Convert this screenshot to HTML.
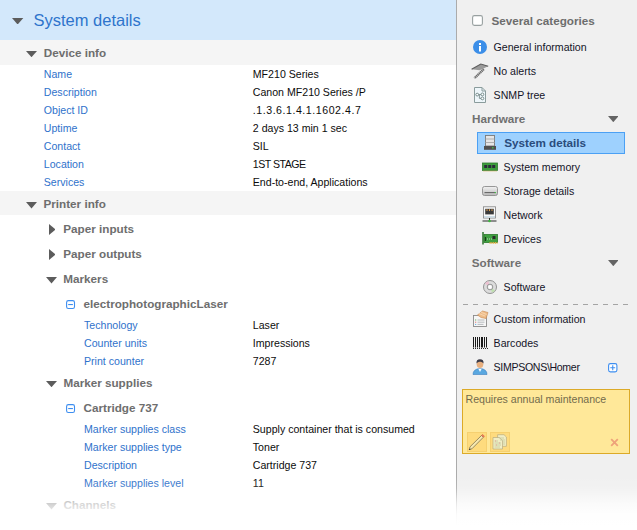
<!DOCTYPE html>
<html><head><meta charset="utf-8"><style>
html,body{margin:0;padding:0;}
body{width:637px;height:530px;position:relative;overflow:hidden;background:#fff;font-family:"Liberation Sans",sans-serif;}
.t{position:absolute;white-space:nowrap;line-height:1;}
svg{display:block}
</style></head><body>
<div style="position:absolute;left:0px;top:0px;width:456px;height:40px;background:#d3e8fb"></div>
<svg style="position:absolute;left:12.4px;top:17.7px" width="11.3" height="6.5"><path d="M0 0H11.3L5.65 6.5Z" fill="#5c5c5c"/></svg>
<div class="t" style="left:33.50px;top:12.03px;font-size:16.5px;color:#2e74cc;">System details</div>
<div style="position:absolute;left:0px;top:40px;width:456px;height:25px;background:#f5f5f5"></div>
<svg style="position:absolute;left:25.5px;top:50.6px" width="11" height="6.2"><path d="M0 0H11L5.5 6.2Z" fill="#5c5c5c"/></svg>
<div class="t" style="left:43.80px;top:46.70px;font-size:11.7px;color:#6e6e6e;font-weight:bold;">Device info</div>
<div class="t" style="left:43.80px;top:68.93px;font-size:10.6px;color:#2f72cb;">Name</div>
<div class="t" style="left:252.80px;top:68.93px;font-size:10.6px;color:#0c0c0c;">MF210 Series</div>
<div class="t" style="left:43.80px;top:86.93px;font-size:10.6px;color:#2f72cb;">Description</div>
<div class="t" style="left:252.80px;top:86.93px;font-size:10.6px;color:#0c0c0c;">Canon MF210 Series /P</div>
<div class="t" style="left:43.80px;top:104.93px;font-size:10.6px;color:#2f72cb;">Object ID</div>
<div class="t" style="left:252.80px;top:104.93px;font-size:10.6px;color:#0c0c0c;"><span style="letter-spacing:0.54px">.1.3.6.1.4.1.1602.4.7</span></div>
<div class="t" style="left:43.80px;top:122.93px;font-size:10.6px;color:#2f72cb;">Uptime</div>
<div class="t" style="left:252.80px;top:122.93px;font-size:10.6px;color:#0c0c0c;">2 days 13 min 1 sec</div>
<div class="t" style="left:43.80px;top:140.93px;font-size:10.6px;color:#2f72cb;">Contact</div>
<div class="t" style="left:252.80px;top:140.93px;font-size:10.6px;color:#0c0c0c;">SIL</div>
<div class="t" style="left:43.80px;top:158.93px;font-size:10.6px;color:#2f72cb;">Location</div>
<div class="t" style="left:252.80px;top:158.93px;font-size:10.6px;color:#0c0c0c;"><span style="letter-spacing:-0.5px">1ST STAGE</span></div>
<div class="t" style="left:43.80px;top:176.93px;font-size:10.6px;color:#2f72cb;">Services</div>
<div class="t" style="left:252.80px;top:176.93px;font-size:10.6px;color:#0c0c0c;">End-to-end, Applications</div>
<div style="position:absolute;left:0px;top:191px;width:456px;height:24px;background:#f5f5f5"></div>
<svg style="position:absolute;left:25.5px;top:202px" width="11" height="6.5"><path d="M0 0H11L5.5 6.5Z" fill="#5c5c5c"/></svg>
<div class="t" style="left:43.50px;top:198.10px;font-size:11.7px;color:#6e6e6e;font-weight:bold;">Printer info</div>
<svg style="position:absolute;left:48.5px;top:223.6px" width="6.6" height="11"><path d="M0 0L6.6 5.5L0 11Z" fill="#5c5c5c"/></svg>
<div class="t" style="left:63.30px;top:223.40px;font-size:11.7px;color:#6e6e6e;font-weight:bold;">Paper inputs</div>
<svg style="position:absolute;left:48.5px;top:248.5px" width="6.6" height="11"><path d="M0 0L6.6 5.5L0 11Z" fill="#5c5c5c"/></svg>
<div class="t" style="left:63.30px;top:247.70px;font-size:11.7px;color:#6e6e6e;font-weight:bold;">Paper outputs</div>
<svg style="position:absolute;left:46px;top:277px" width="11" height="6.5"><path d="M0 0H11L5.5 6.5Z" fill="#5c5c5c"/></svg>
<div class="t" style="left:63.30px;top:273.30px;font-size:11.7px;color:#6e6e6e;font-weight:bold;">Markers</div>
<svg style="position:absolute;left:66px;top:300px" width="10" height="10"><rect x="0.6" y="0.6" width="7.9" height="7.9" rx="1.8" fill="#fff" stroke="#3d8ef0" stroke-width="1.1"/><path d="M2.2 4.55H6.9" stroke="#3d8ef0" stroke-width="1.1"/></svg>
<div class="t" style="left:83.50px;top:298.10px;font-size:11.7px;color:#6e6e6e;font-weight:bold;">electrophotographicLaser</div>
<div class="t" style="left:84.00px;top:320.03px;font-size:10.6px;color:#2f72cb;">Technology</div>
<div class="t" style="left:252.80px;top:320.03px;font-size:10.6px;color:#0c0c0c;">Laser</div>
<div class="t" style="left:84.00px;top:338.03px;font-size:10.6px;color:#2f72cb;">Counter units</div>
<div class="t" style="left:252.80px;top:338.03px;font-size:10.6px;color:#0c0c0c;">Impressions</div>
<div class="t" style="left:84.00px;top:356.03px;font-size:10.6px;color:#2f72cb;">Print counter</div>
<div class="t" style="left:252.80px;top:356.03px;font-size:10.6px;color:#0c0c0c;">7287</div>
<svg style="position:absolute;left:45.5px;top:380.6px" width="11" height="6.2"><path d="M0 0H11L5.5 6.2Z" fill="#5c5c5c"/></svg>
<div class="t" style="left:63.40px;top:376.70px;font-size:11.7px;color:#6e6e6e;font-weight:bold;">Marker supplies</div>
<svg style="position:absolute;left:66px;top:404px" width="10" height="10"><rect x="0.6" y="0.6" width="7.9" height="7.9" rx="1.8" fill="#fff" stroke="#3d8ef0" stroke-width="1.1"/><path d="M2.2 4.55H6.9" stroke="#3d8ef0" stroke-width="1.1"/></svg>
<div class="t" style="left:83.50px;top:401.70px;font-size:11.7px;color:#6e6e6e;font-weight:bold;">Cartridge 737</div>
<div class="t" style="left:84.00px;top:424.03px;font-size:10.6px;color:#2f72cb;">Marker supplies class</div>
<div class="t" style="left:252.80px;top:424.03px;font-size:10.6px;color:#0c0c0c;">Supply container that is consumed</div>
<div class="t" style="left:84.00px;top:442.03px;font-size:10.6px;color:#2f72cb;">Marker supplies type</div>
<div class="t" style="left:252.80px;top:442.03px;font-size:10.6px;color:#0c0c0c;">Toner</div>
<div class="t" style="left:84.00px;top:460.03px;font-size:10.6px;color:#2f72cb;">Description</div>
<div class="t" style="left:252.80px;top:460.03px;font-size:10.6px;color:#0c0c0c;">Cartridge 737</div>
<div class="t" style="left:84.00px;top:478.03px;font-size:10.6px;color:#2f72cb;">Marker supplies level</div>
<div class="t" style="left:252.80px;top:478.03px;font-size:10.6px;color:#0c0c0c;">11</div>
<svg style="position:absolute;left:45.5px;top:503px" width="11" height="6.5"><path d="M0 0H11L5.5 6.5Z" fill="#5c5c5c"/></svg>
<div class="t" style="left:63.40px;top:498.90px;font-size:11.7px;color:#6e6e6e;font-weight:bold;">Channels</div>
<div class="t" style="left:86.00px;top:524.53px;font-size:10.6px;color:#2f72cb;">Channel 1.1</div>
<div style="position:absolute;left:456px;top:0px;width:1px;height:530px;background:#ababab"></div>
<div style="position:absolute;left:457px;top:0px;width:180px;height:530px;background:#f0f0f0"></div>
<svg style="position:absolute;left:472px;top:15px" width="11" height="11"><rect x="0.6" y="0.6" width="9.8" height="9.8" rx="1.8" fill="#fff" stroke="#98a0a0" stroke-width="1.1"/></svg>
<div class="t" style="left:491.50px;top:14.90px;font-size:11.7px;color:#6d6d6d;font-weight:bold;">Several categories</div>
<svg style="position:absolute;left:473px;top:40px" width="14" height="14"><circle cx="7" cy="7" r="7" fill="#3b8ee8"/><rect x="6" y="6" width="2" height="5.5" fill="#fff"/><rect x="6" y="3" width="2" height="2" fill="#fff"/></svg>
<div class="t" style="left:493.60px;top:41.63px;font-size:10.6px;color:#141428;">General information</div>
<svg style="position:absolute;left:468px;top:60px" width="24" height="22"><path d="M3.6 9.3L12.8 4L20.2 6.2L11.6 10.3Z" fill="#9a9a9a"/><path d="M3.6 9.3L12.8 4L20.2 6.2" fill="none" stroke="#5e5e5e" stroke-width="1.1"/><path d="M15.8 9.2L6.4 18.2" stroke="#6e6e6e" stroke-width="2.3" stroke-dasharray="1.3 0.5"/></svg>
<div class="t" style="left:493.60px;top:66.33px;font-size:10.6px;color:#141428;">No alerts</div>
<svg style="position:absolute;left:474px;top:87px" width="13" height="17"><path d="M0.5 0.5H8L11.5 4V15.5H0.5Z" fill="#eef6fa" stroke="#8a9c9c"/><path d="M8 0.5V4H11.5" fill="none" stroke="#8a9c9c"/><path d="M3.2 7.6H8.4M5.4 7.6V11.4H8.4" stroke="#7a8c8c" stroke-width="0.9" fill="none"/><circle cx="3.2" cy="7.6" r="1.4" fill="#fff" stroke="#6a8282" stroke-width="0.9"/><circle cx="8.4" cy="7.4" r="1.4" fill="#fff" stroke="#6a8282" stroke-width="0.9"/><circle cx="8.4" cy="11.4" r="1.4" fill="#fff" stroke="#6a8282" stroke-width="0.9"/></svg>
<div class="t" style="left:493.60px;top:90.43px;font-size:10.6px;color:#141428;">SNMP tree</div>
<div class="t" style="left:472.00px;top:112.90px;font-size:11.7px;color:#707070;font-weight:bold;">Hardware</div>
<svg style="position:absolute;left:607.8px;top:115.9px" width="10.6" height="6.2"><path d="M0 0H10.6L5.3 6.2Z" fill="#646464"/></svg>
<div style="position:absolute;left:477px;top:132px;width:148px;height:22px;background:#9ed1fe;border:1px solid #4ba0f4;box-sizing:border-box"></div>
<svg style="position:absolute;left:484px;top:135px" width="12" height="15"><rect x="1.5" y="0.5" width="9" height="10.5" fill="#e6e6e6" stroke="#7a7a7a" stroke-width="0.9"/><path d="M1.5 4H10.5M1.5 7.5H10.5" stroke="#a8a8a8" stroke-width="0.9"/><rect x="0" y="11" width="12" height="3.8" fill="#505050"/><rect x="8" y="12.2" width="1.5" height="1.2" fill="#4c4"/></svg>
<div class="t" style="left:504.20px;top:136.60px;font-size:11.7px;color:#2a4c7c;font-weight:bold;">System details</div>
<svg style="position:absolute;left:482px;top:162px" width="16" height="10"><rect x="0.5" y="1" width="15" height="7.5" fill="#3c9c3c" stroke="#2c7a2c" stroke-width="0.8"/><rect x="2.2" y="3" width="3" height="3" fill="#2a2a3a"/><rect x="6.2" y="3" width="3" height="3" fill="#2a2a3a"/><rect x="10.2" y="3" width="3" height="3" fill="#2a2a3a"/><path d="M2 8.5V9.6M4 8.5V9.6M6 8.5V9.6M8 8.5V9.6M10 8.5V9.6M12 8.5V9.6M14 8.5V9.6" stroke="#d8b060" stroke-width="1"/></svg>
<div class="t" style="left:503.60px;top:161.83px;font-size:10.6px;color:#141428;">System memory</div>
<svg style="position:absolute;left:482px;top:186px" width="16" height="10"><defs><linearGradient id="sg" x1="0" y1="0" x2="0" y2="1"><stop offset="0" stop-color="#f2f2f2"/><stop offset="0.55" stop-color="#d4d4d4"/><stop offset="1" stop-color="#b8b8b8"/></linearGradient></defs><rect x="0.5" y="0.5" width="15" height="9" rx="2" fill="url(#sg)" stroke="#8c8c8c" stroke-width="0.9"/><rect x="2.5" y="6" width="11" height="1.1" fill="#6a6a6a"/><rect x="12.8" y="6" width="1.2" height="1.1" fill="#4c4"/></svg>
<div class="t" style="left:503.60px;top:185.83px;font-size:10.6px;color:#141428;">Storage details</div>
<svg style="position:absolute;left:482px;top:206px" width="15" height="17"><rect x="1.5" y="0.8" width="12" height="11.2" fill="#fafafa" stroke="#8a8a8a" stroke-width="0.9"/><rect x="3.2" y="2.8" width="8.6" height="5.6" fill="#3a3a3a"/><path d="M5 3.2V5M7.5 3.2V5M10 3.2V5" stroke="#e0a050" stroke-width="1"/><rect x="2" y="10" width="11" height="1.6" fill="#cfe0ea"/><path d="M7.5 12V15" stroke="#2a2a2a" stroke-width="1"/><path d="M0.5 15H14.5" stroke="#2a2a2a" stroke-width="1"/><circle cx="7.5" cy="15" r="1.3" fill="#3cb83c"/></svg>
<div class="t" style="left:503.60px;top:209.83px;font-size:10.6px;color:#141428;">Network</div>
<svg style="position:absolute;left:482px;top:232px" width="16" height="13"><rect x="2" y="2.5" width="13.5" height="8" fill="#3fa040" stroke="#2a7a2a" stroke-width="0.8"/><rect x="10.5" y="4" width="3" height="3" fill="#2a2a2a"/><path d="M7.5 10.8H15.5" stroke="#e0b040" stroke-width="1.8" stroke-dasharray="1.2 0.6"/><path d="M1 0V12.5" stroke="#1e6a1e" stroke-width="1.4"/><path d="M3.5 5V9" stroke="#1a3a1a" stroke-width="1.2"/><path d="M5 7H10" stroke="#d0e8d0" stroke-width="0.9" stroke-dasharray="1 1"/></svg>
<div class="t" style="left:503.60px;top:233.73px;font-size:10.6px;color:#141428;">Devices</div>
<div class="t" style="left:471.80px;top:257.10px;font-size:11.7px;color:#707070;font-weight:bold;">Software</div>
<svg style="position:absolute;left:607.8px;top:259.9px" width="10.6" height="6.2"><path d="M0 0H10.6L5.3 6.2Z" fill="#646464"/></svg>
<svg style="position:absolute;left:483px;top:280px" width="15" height="15"><circle cx="7" cy="7" r="6.5" fill="#dcdcdc" stroke="#8a8a8a" stroke-width="0.9"/><path d="M7 7L2 3.5A6 6 0 0 1 5.5 1.2Z" fill="#ecc0d0"/><path d="M7 7L12 10.5A6 6 0 0 1 9 12.6Z" fill="#c0e0b0"/><circle cx="7" cy="7" r="2.8" fill="#f4f4f4" stroke="#8a8a8a" stroke-width="0.9"/><circle cx="7" cy="7" r="1.2" fill="#fff"/></svg>
<div class="t" style="left:503.60px;top:282.03px;font-size:10.6px;color:#141428;">Software</div>
<svg style="position:absolute;left:463px;top:304px" width="166" height="1"><path d="M0 0.5H166" stroke="#a4a4a4" stroke-width="1" stroke-dasharray="5 5"/></svg>
<svg style="position:absolute;left:472px;top:310px" width="17" height="18"><rect x="1.5" y="5.5" width="13" height="11" fill="#f6f6f6" stroke="#8a8a8a" stroke-width="0.9"/><path d="M5.5 5L10.5 1L16 2.5L14 8.5L9 7.5Z" fill="#eebc88" stroke="#c88850" stroke-width="0.6"/><path d="M7 3.5L13 6M9 2.2L14.5 4.5" stroke="#fae0c0" stroke-width="0.7"/><path d="M3.2 10H4.2" stroke="#4a4" stroke-width="1"/><path d="M3.2 12.2H4.2" stroke="#d55" stroke-width="1"/><path d="M3.2 14.4H4.2" stroke="#49d" stroke-width="1"/><path d="M5.5 10H12.5M5.5 12.2H12.5M5.5 14.4H11.5" stroke="#b0b4b8" stroke-width="0.9"/></svg>
<div class="t" style="left:493.60px;top:313.93px;font-size:10.6px;color:#141428;">Custom information</div>
<svg style="position:absolute;left:473px;top:337px" width="15" height="13"><path d="M0.5 0V10.5M2.5 0V10.5M4.5 0V10.5M6.5 0V10.5M11.5 0V10.5M13.5 0V10.5" stroke="#1a1a1a" stroke-width="1"/><path d="M9 0V10.5" stroke="#1a1a1a" stroke-width="2"/><path d="M0 11.5H15" stroke="#2a2a2a" stroke-width="1" stroke-dasharray="1 1"/></svg>
<div class="t" style="left:493.60px;top:337.93px;font-size:10.6px;color:#141428;">Barcodes</div>
<svg style="position:absolute;left:472px;top:358px" width="16" height="17"><path d="M1 16.5Q1 11 8 10.5Q15 11 15 16.5Z" fill="#5aa8e0" stroke="#3a80c0" stroke-width="0.6"/><path d="M6.3 10.8L8 14L9.7 10.8Z" fill="#fff"/><ellipse cx="8" cy="6.2" rx="3.3" ry="3.8" fill="#e8b080"/><path d="M4.5 5.5Q4 1.2 8 1.2Q12 1.2 11.5 5.5Q10 3.5 8 3.8Q6 3.5 4.5 5.5Z" fill="#3a3a48"/></svg>
<div class="t" style="left:493.60px;top:361.63px;font-size:10.6px;color:#141428;letter-spacing:-0.33px;">SIMPSONS\Homer</div>
<svg style="position:absolute;left:608px;top:363px" width="10" height="10"><rect x="0.6" y="0.6" width="8.3" height="8.3" rx="1.8" fill="#fff" stroke="#3d8ef0" stroke-width="1.1"/><path d="M2.3 4.75H7.2M4.75 2.3V7.2" stroke="#3d8ef0" stroke-width="1.1"/></svg>
<div style="position:absolute;left:462px;top:389px;width:168px;height:65px;background:#ffe899;border:1px solid #dcaa28;box-sizing:border-box"></div>
<div class="t" style="left:465.50px;top:394.23px;font-size:10.6px;color:#736b4c;">Requires annual maintenance</div>
<div style="position:absolute;left:467px;top:432px;width:20px;height:20px;background:#fedb7e;border:1px solid #f6d070;box-sizing:border-box"></div>
<svg style="position:absolute;left:467px;top:432px" width="20" height="20"><path d="M2.2 17.6L3 14.8L14.6 3.4L16.4 5.2L4.9 16.8Z" fill="#f6e8b0" stroke="#6e6448" stroke-width="0.7"/><path d="M14.6 3.4L15.6 2.4L17.4 4.2L16.4 5.2Z" fill="#f08060" stroke="#d06040" stroke-width="0.6"/><path d="M2.2 17.6L3.4 17.2" stroke="#333" stroke-width="1"/></svg>
<div style="position:absolute;left:490px;top:432px;width:20px;height:20px;background:#fedb7e;border:1px solid #f6d070;box-sizing:border-box"></div>
<svg style="position:absolute;left:490px;top:432px" width="20" height="20"><path d="M7.6 2.7H14L16.4 5V14.3H7.6Z" fill="#f2eec4" stroke="#b8ac80" stroke-width="0.7"/><path d="M3 5.5H9.4L12.5 8.6V17H3Z" fill="#f2eec4" stroke="#b8ac80" stroke-width="0.7"/><path d="M4.5 9H8M4.5 11H11M4.5 13H11M4.5 15H10M9 6H14M10 8H15M13 10H15M13 12H15" stroke="#c0c8a0" stroke-width="0.8"/><path d="M5 9H6M9 11H10M6 13H7" stroke="#e89090" stroke-width="0.8"/></svg>
<svg style="position:absolute;left:610px;top:438px" width="9" height="9"><path d="M1.2 1.2L7.8 7.8M7.8 1.2L1.2 7.8" stroke="#eea27a" stroke-width="1.8"/></svg>
<div style="position:absolute;left:0;top:476px;width:637px;height:54px;background:linear-gradient(to bottom, rgba(255,255,255,0) 0px, rgba(255,255,255,0.12) 12px, rgba(255,255,255,0.72) 28px, rgba(255,255,255,0.93) 38px, #fff 50px)"></div>
</body></html>
